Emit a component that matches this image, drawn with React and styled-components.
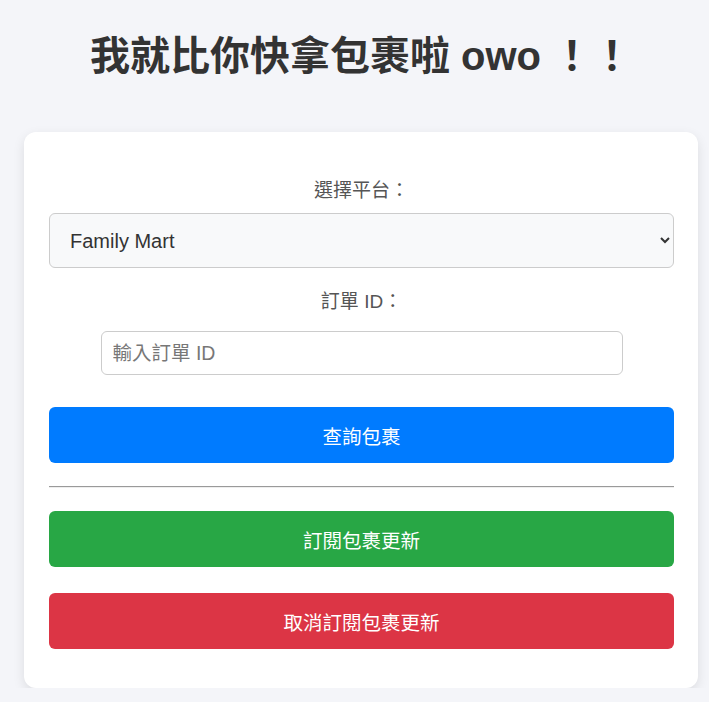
import React from "react";
import styled, { createGlobalStyle } from "styled-components";

const Global = createGlobalStyle`
  html, body {
    margin: 0;
    padding: 0;
    background: #f4f5f9;
    font-family: "Liberation Sans", "Noto Sans CJK TC", Arial, sans-serif;
    color: #333;
  }
`;

const Page = styled.div`
  display: flex;
  flex-direction: column;
  padding: 0 11px 0 24px;
`;

const Title = styled.h1`
  margin: 32px 0 52px;
  text-align: center;
  font-size: 40px;
  line-height: 48px;
  font-weight: 700;
  color: #333;
`;

const Card = styled.div`
  background: #fff;
  border-radius: 12px;
  box-shadow: 0 4px 12px rgba(0, 0, 0, 0.1);
  padding: 25px 24px 39px 25px;
  display: flex;
  flex-direction: column;
  align-items: center;
`;

const Label = styled.label`
  margin-top: ${(p) => p.$top}px;
  margin-bottom: ${(p) => p.$bottom}px;
  font-size: 19px;
  line-height: 24px;
  color: #555;
  text-align: center;
`;

const Select = styled.select`
  width: 100%;
  height: 55px;
  box-sizing: border-box;
  padding: 0 14px 0 16px;
  font-family: "Liberation Sans", "Noto Sans CJK TC", Arial, sans-serif;
  font-size: 20px;
  color: #333;
  background: #f8f9fa;
  border: 1px solid #ccc;
  border-radius: 6px;
  outline: none;
`;

const Input = styled.input`
  width: 522px;
  height: 44px;
  box-sizing: border-box;
  padding: 0 11px;
  font-family: "Liberation Sans", "Noto Sans CJK TC", Arial, sans-serif;
  font-size: 19.5px;
  color: #333;
  background: #fff;
  border: 1px solid #ccc;
  border-radius: 6px;
  outline: none;
  &::placeholder {
    color: #777;
  }
`;

const Button = styled.button`
  width: 100%;
  height: 56px;
  margin-top: ${(p) => p.$top}px;
  border: none;
  border-radius: 6px;
  background: ${(p) => p.$bg};
  color: #fff;
  font-family: "Liberation Sans", "Noto Sans CJK TC", Arial, sans-serif;
  font-size: 19.5px;
  cursor: pointer;
`;

const Divider = styled.hr`
  width: 100%;
  box-sizing: border-box;
  margin: 23px 0 0;
  border: none;
  border-top: 1px solid #9a9a9a;
  border-bottom: 1px solid #eee;
`;

export default function App() {
  return (
    <>
      <Global />
      <Page>
        <Title>我就比你快拿包裹啦 owo ！！</Title>
        <Card>
          <Label $top={22} $bottom={10}>選擇平台：</Label>
          <Select defaultValue="family">
            <option value="family">Family Mart</option>
            <option value="seven">7-ELEVEN</option>
          </Select>
          <Label $top={22} $bottom={17}>訂單 ID：</Label>
          <Input placeholder="輸入訂單 ID" />
          <Button $top={32} $bg="#007bff">查詢包裹</Button>
          <Divider />
          <Button $top={23} $bg="#28a745">訂閱包裹更新</Button>
          <Button $top={26} $bg="#dc3545">取消訂閱包裹更新</Button>
        </Card>
      </Page>
    </>
  );
}
